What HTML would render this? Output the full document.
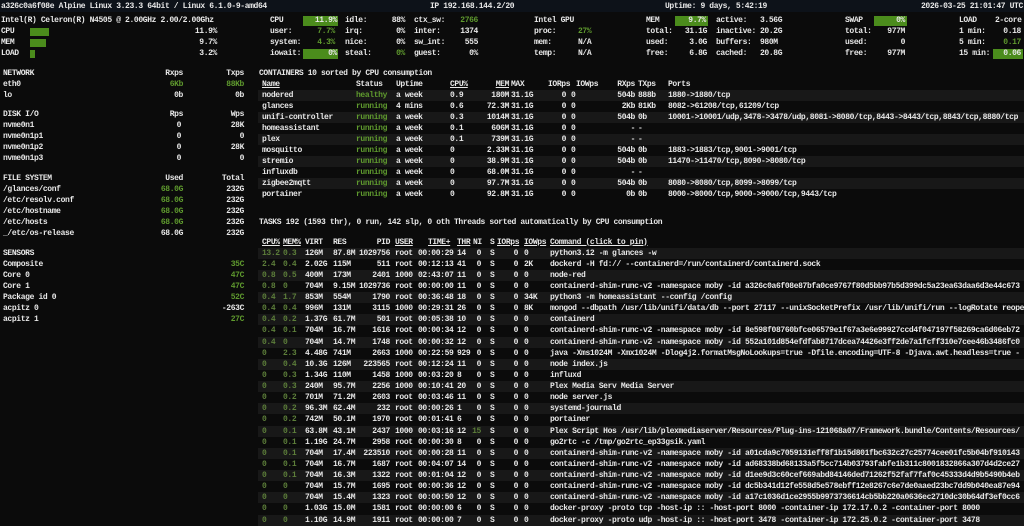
<!DOCTYPE html>
<html><head><meta charset="utf-8">
<style>
*{margin:0;padding:0;box-sizing:border-box}
body{width:1024px;height:526px;background:#0b0b0b;color:#e8e8e8;font-family:"Liberation Mono","DejaVu Sans Mono",monospace;font-size:8px;font-weight:bold;letter-spacing:-0.37px;position:relative;overflow:hidden}
.t{position:absolute;white-space:pre;line-height:11px;height:11px}
.r{text-align:right}
.g{color:#5f9a2e}
.d{color:#5d7f3a}
.box{position:absolute;background:#4b8c1c;height:10px}
.bar{position:absolute;background:#4b8c1c;height:8px}
.u{text-decoration:underline}
.row{position:absolute;left:258px;width:766px;height:11px;white-space:pre;line-height:11px}
.st{background:#181818}
.pr{display:grid;grid-template-columns:21px 22px 28px 25px 37px 23px 39px 15px 18px 7px 27px 26px auto;padding-left:4px}
.pr>span{overflow:visible;white-space:pre}
.pr>.pid{text-align:right;padding-right:5px}
.pr>.ni{text-align:right;padding-right:9px}
.pr>.io{text-align:right;padding-right:6px}
.cr{display:grid;grid-template-columns:94px 40px 54px 30px 31px 38px 22px 37px 30px 30px auto;padding-left:4px}
.cr>.rr{text-align:right;padding-right:2px}
.cr>.ri{text-align:right;padding-right:5px}
.cr>.rx{text-align:right;padding-right:3px}
</style></head><body>
<div style="position:absolute;left:0;top:0;width:1024px;height:12px;background:#0d1219"></div>
<div class="t" style="left:1px;top:1px">a326c0a6f08e Alpine Linux 3.23.3 64bit / Linux 6.1.0-9-amd64</div>
<div class="t" style="left:430px;top:1px">IP 192.168.144.2/20</div>
<div class="t" style="left:665px;top:1px">Uptime: 9 days, 5:42:19</div>
<div class="t" style="left:921px;top:1px">2026-03-25 21:01:47 UTC</div>

<div class="t" style="left:1px;top:15px">Intel(R) Celeron(R) N4505 @ 2.00GHz 2.00/2.00Ghz</div>
<div class="t" style="left:1px;top:26px">CPU</div><div class="bar" style="left:30px;top:28px;width:19px"></div><div class="t r" style="right:807px;top:26px">11.9%</div>
<div class="t" style="left:1px;top:37px">MEM</div><div class="bar" style="left:30px;top:39px;width:16px"></div><div class="t r" style="right:807px;top:37px">9.7%</div>
<div class="t" style="left:1px;top:48px">LOAD</div><div class="bar" style="left:30px;top:50px;width:5px"></div><div class="t r" style="right:807px;top:48px">3.2%</div>

<div class="t" style="left:270px;top:15px">CPU</div><div class="box" style="left:303px;top:16px;width:35px"></div><div class="t r" style="right:687px;top:15px">11.9%</div>
<div class="t" style="left:270px;top:26px">user:</div><div class="t r g" style="right:689px;top:26px">7.7%</div>
<div class="t" style="left:270px;top:37px">system:</div><div class="t r g" style="right:689px;top:37px">4.3%</div>
<div class="t" style="left:270px;top:48px">iowait:</div><div class="box" style="left:303px;top:49px;width:35px"></div><div class="t r" style="right:687px;top:48px">0%</div>
<div class="t" style="left:345px;top:15px">idle:</div><div class="t r" style="right:619px;top:15px">88%</div>
<div class="t" style="left:345px;top:26px">irq:</div><div class="t r" style="right:619px;top:26px">0%</div>
<div class="t" style="left:345px;top:37px">nice:</div><div class="t r" style="right:619px;top:37px">0%</div>
<div class="t" style="left:345px;top:48px">steal:</div><div class="t r g" style="right:619px;top:48px">0%</div>
<div class="t" style="left:414px;top:15px">ctx_sw:</div><div class="t r g" style="right:546px;top:15px">2766</div>
<div class="t" style="left:414px;top:26px">inter:</div><div class="t r" style="right:546px;top:26px">1374</div>
<div class="t" style="left:414px;top:37px">sw_int:</div><div class="t r" style="right:546px;top:37px">555</div>
<div class="t" style="left:414px;top:48px">guest:</div><div class="t r" style="right:546px;top:48px">0%</div>
<div class="t" style="left:534px;top:15px">Intel GPU</div>
<div class="t" style="left:534px;top:26px">proc:</div><div class="t g" style="left:578px;top:26px">27%</div>
<div class="t" style="left:534px;top:37px">mem:</div><div class="t" style="left:578px;top:37px">N/A</div>
<div class="t" style="left:534px;top:48px">temp:</div><div class="t" style="left:578px;top:48px">N/A</div>
<div class="t" style="left:646px;top:15px">MEM</div><div class="box" style="left:675px;top:16px;width:33px"></div><div class="t r" style="right:318px;top:15px">9.7%</div>
<div class="t" style="left:646px;top:26px">total:</div><div class="t r" style="right:317px;top:26px">31.1G</div>
<div class="t" style="left:646px;top:37px">used:</div><div class="t r" style="right:317px;top:37px">3.0G</div>
<div class="t" style="left:646px;top:48px">free:</div><div class="t r" style="right:317px;top:48px">6.8G</div>
<div class="t" style="left:716px;top:15px">active:</div><div class="t" style="left:760px;top:15px">3.56G</div>
<div class="t" style="left:716px;top:26px">inactive:</div><div class="t" style="left:760px;top:26px">20.2G</div>
<div class="t" style="left:716px;top:37px">buffers:</div><div class="t" style="left:760px;top:37px">980M</div>
<div class="t" style="left:716px;top:48px">cached:</div><div class="t" style="left:760px;top:48px">20.8G</div>
<div class="t" style="left:845px;top:15px">SWAP</div><div class="box" style="left:874px;top:16px;width:33px"></div><div class="t r" style="right:119px;top:15px">0%</div>
<div class="t" style="left:845px;top:26px">total:</div><div class="t r" style="right:119px;top:26px">977M</div>
<div class="t" style="left:845px;top:37px">used:</div><div class="t r" style="right:119px;top:37px">0</div>
<div class="t" style="left:845px;top:48px">free:</div><div class="t r" style="right:119px;top:48px">977M</div>
<div class="t" style="left:959px;top:15px">LOAD</div><div class="t" style="left:995px;top:15px">2-core</div>
<div class="t" style="left:959px;top:26px">1 min:</div><div class="t r" style="right:3px;top:26px">0.18</div>
<div class="t" style="left:959px;top:37px">5 min:</div><div class="t r g" style="right:3px;top:37px">0.17</div>
<div class="t" style="left:959px;top:48px">15 min:</div><div class="box" style="left:993px;top:49px;width:30px"></div><div class="t r" style="right:3px;top:48px">0.06</div>

<div class="t" style="left:3px;top:68px">NETWORK</div><div class="t r" style="right:841px;top:68px">Rxps</div><div class="t r" style="right:780px;top:68px">Txps</div>
<div class="t" style="left:3px;top:79px">eth0</div><div class="t r g" style="right:841px;top:79px">6Kb</div><div class="t r g" style="right:780px;top:79px">88Kb</div>
<div class="t" style="left:3px;top:90px">lo</div><div class="t r" style="right:841px;top:90px">0b</div><div class="t r" style="right:780px;top:90px">0b</div>

<div class="t" style="left:3px;top:109px">DISK I/O</div><div class="t r" style="right:841px;top:109px">Rps</div><div class="t r" style="right:780px;top:109px">Wps</div>
<div class="t" style="left:3px;top:120px">nvme0n1</div><div class="t r" style="right:843px;top:120px">0</div><div class="t r" style="right:780px;top:120px">28K</div>
<div class="t" style="left:3px;top:131px">nvme0n1p1</div><div class="t r" style="right:843px;top:131px">0</div><div class="t r" style="right:780px;top:131px">0</div>
<div class="t" style="left:3px;top:142px">nvme0n1p2</div><div class="t r" style="right:843px;top:142px">0</div><div class="t r" style="right:780px;top:142px">28K</div>
<div class="t" style="left:3px;top:153px">nvme0n1p3</div><div class="t r" style="right:843px;top:153px">0</div><div class="t r" style="right:780px;top:153px">0</div>

<div class="t" style="left:3px;top:173px">FILE SYSTEM</div><div class="t r" style="right:841px;top:173px">Used</div><div class="t r" style="right:780px;top:173px">Total</div>
<div class="t" style="left:3px;top:184px">/glances/conf</div><div class="t r g" style="right:841px;top:184px">68.0G</div><div class="t r" style="right:780px;top:184px">232G</div>
<div class="t" style="left:3px;top:195px">/etc/resolv.conf</div><div class="t r g" style="right:841px;top:195px">68.0G</div><div class="t r" style="right:780px;top:195px">232G</div>
<div class="t" style="left:3px;top:206px">/etc/hostname</div><div class="t r g" style="right:841px;top:206px">68.0G</div><div class="t r" style="right:780px;top:206px">232G</div>
<div class="t" style="left:3px;top:217px">/etc/hosts</div><div class="t r g" style="right:841px;top:217px">68.0G</div><div class="t r" style="right:780px;top:217px">232G</div>
<div class="t" style="left:3px;top:228px">_/etc/os-release</div><div class="t r" style="right:841px;top:228px">68.0G</div><div class="t r" style="right:780px;top:228px">232G</div>

<div class="t" style="left:3px;top:248px">SENSORS</div>
<div class="t" style="left:3px;top:259px">Composite</div><div class="t r g" style="right:780px;top:259px">35C</div>
<div class="t" style="left:3px;top:270px">Core 0</div><div class="t r g" style="right:780px;top:270px">47C</div>
<div class="t" style="left:3px;top:281px">Core 1</div><div class="t r g" style="right:780px;top:281px">47C</div>
<div class="t" style="left:3px;top:292px">Package id 0</div><div class="t r g" style="right:780px;top:292px">52C</div>
<div class="t" style="left:3px;top:303px">acpitz 0</div><div class="t r" style="right:780px;top:303px">-263C</div>
<div class="t" style="left:3px;top:314px">acpitz 1</div><div class="t r g" style="right:780px;top:314px">27C</div>

<div class="t" style="left:259px;top:68px">CONTAINERS 10 sorted by CPU consumption</div>
<div class="row cr" style="top:79px"><span class="u">Name</span><span>Status</span><span>Uptime</span><span class="u">CPU%</span><span class="rr u">MEM</span><span>MAX</span><span style="margin-left:-1px">IORps</span><span style="padding-left:5px">IOWps</span><span class="rx">RXps</span><span>TXps</span><span>Ports</span></div>
<div class="row cr st" style="top:90px"><span>nodered</span><span class="g">healthy</span><span>a week</span><span>0.9</span><span class="rr">180M</span><span>31.1G</span><span class="ri">0</span><span>0</span><span class="rx">504b</span><span>888b</span><span>1880-&gt;1880/tcp</span></div>
<div class="row cr" style="top:101px"><span>glances</span><span class="g">running</span><span>4 mins</span><span>0.6</span><span class="rr">72.3M</span><span>31.1G</span><span class="ri">0</span><span>0</span><span class="rx">2Kb</span><span>81Kb</span><span>8082-&gt;61208/tcp,61209/tcp</span></div>
<div class="row cr st" style="top:112px"><span>unifi-controller</span><span class="g">running</span><span>a week</span><span>0.3</span><span class="rr">1014M</span><span>31.1G</span><span class="ri">0</span><span>0</span><span class="rx">504b</span><span>0b</span><span>10001-&gt;10001/udp,3478-&gt;3478/udp,8081-&gt;8080/tcp,8443-&gt;8443/tcp,8843/tcp,8880/tcp</span></div>
<div class="row cr" style="top:123px"><span>homeassistant</span><span class="g">running</span><span>a week</span><span>0.1</span><span class="rr">606M</span><span>31.1G</span><span class="ri">0</span><span>0</span><span class="rx">-</span><span>-</span><span></span></div>
<div class="row cr st" style="top:134px"><span>plex</span><span class="g">running</span><span>a week</span><span>0.1</span><span class="rr">739M</span><span>31.1G</span><span class="ri">0</span><span>0</span><span class="rx">-</span><span>-</span><span></span></div>
<div class="row cr" style="top:145px"><span>mosquitto</span><span class="g">running</span><span>a week</span><span>0</span><span class="rr">2.33M</span><span>31.1G</span><span class="ri">0</span><span>0</span><span class="rx">504b</span><span>0b</span><span>1883-&gt;1883/tcp,9001-&gt;9001/tcp</span></div>
<div class="row cr st" style="top:156px"><span>stremio</span><span class="g">running</span><span>a week</span><span>0</span><span class="rr">38.9M</span><span>31.1G</span><span class="ri">0</span><span>0</span><span class="rx">504b</span><span>0b</span><span>11470-&gt;11470/tcp,8090-&gt;8080/tcp</span></div>
<div class="row cr" style="top:167px"><span>influxdb</span><span class="g">running</span><span>a week</span><span>0</span><span class="rr">68.0M</span><span>31.1G</span><span class="ri">0</span><span>0</span><span class="rx">-</span><span>-</span><span></span></div>
<div class="row cr st" style="top:178px"><span>zigbee2mqtt</span><span class="g">running</span><span>a week</span><span>0</span><span class="rr">97.7M</span><span>31.1G</span><span class="ri">0</span><span>0</span><span class="rx">504b</span><span>0b</span><span>8080-&gt;8080/tcp,8099-&gt;8099/tcp</span></div>
<div class="row cr" style="top:189px"><span>portainer</span><span class="g">running</span><span>a week</span><span>0</span><span class="rr">92.8M</span><span>31.1G</span><span class="ri">0</span><span>0</span><span class="rx">0b</span><span>0b</span><span>8000-&gt;8000/tcp,9000-&gt;9000/tcp,9443/tcp</span></div>

<div class="t" style="left:259px;top:217px">TASKS 192 (1593 thr), 0 run, 142 slp, 0 oth Threads sorted automatically by CPU consumption</div>

<div class="row pr" style="top:236.5px"><span class="u">CPU%</span><span class="u">MEM%</span><span>VIRT</span><span>RES</span><span class="pid">PID</span><span class="u">USER</span><span class="u" style="padding-left:10px">TIME+</span><span class="u">THR</span><span style="padding-left:1px">NI</span><span>S</span><span class="u">IORps</span><span class="u">IOWps</span><span class="u">Command (click to pin)</span></div>
<div class="row pr st" style="top:247.5px"><span class="d">13.2</span><span class="d">0.3</span><span>126M</span><span>87.8M</span><span class="pid">1029756</span><span>root</span><span>00:00:29</span><span>14</span><span class="ni">0</span><span>S</span><span class="io">0</span><span>0</span><span>python3.12 -m glances -w</span></div>
<div class="row pr" style="top:258.6px"><span class="d">2.4</span><span class="d">0.4</span><span>2.02G</span><span>115M</span><span class="pid">511</span><span>root</span><span>00:12:13</span><span>41</span><span class="ni">0</span><span>S</span><span class="io">0</span><span>2K</span><span>dockerd -H fd:// --containerd=/run/containerd/containerd.sock</span></div>
<div class="row pr st" style="top:269.8px"><span class="d">0.8</span><span class="d">0.5</span><span>400M</span><span>173M</span><span class="pid">2401</span><span>1000</span><span>02:43:07</span><span>11</span><span class="ni">0</span><span>S</span><span class="io">0</span><span>0</span><span>node-red</span></div>
<div class="row pr" style="top:280.9px"><span class="d">0.8</span><span class="d">0</span><span>704M</span><span>9.15M</span><span class="pid">1029736</span><span>root</span><span>00:00:00</span><span>11</span><span class="ni">0</span><span>S</span><span class="io">0</span><span>0</span><span>containerd-shim-runc-v2 -namespace moby -id a326c0a6f08e87bfa0ce9767f80d5bb97b5d399dc5a23ea63daa6d3e44c673</span></div>
<div class="row pr st" style="top:292px"><span class="d">0.4</span><span class="d">1.7</span><span>853M</span><span>554M</span><span class="pid">1790</span><span>root</span><span>00:36:48</span><span>18</span><span class="ni">0</span><span>S</span><span class="io">0</span><span>34K</span><span>python3 -m homeassistant --config /config</span></div>
<div class="row pr" style="top:303.1px"><span class="d">0.4</span><span class="d">0.4</span><span>996M</span><span>131M</span><span class="pid">3115</span><span>1000</span><span>00:29:31</span><span>26</span><span class="ni">0</span><span>S</span><span class="io">0</span><span>8K</span><span>mongod --dbpath /usr/lib/unifi/data/db --port 27117 --unixSocketPrefix /usr/lib/unifi/run --logRotate reopen</span></div>
<div class="row pr st" style="top:314.3px"><span class="d">0.4</span><span class="d">0.2</span><span>1.37G</span><span>61.7M</span><span class="pid">501</span><span>root</span><span>00:05:38</span><span>10</span><span class="ni">0</span><span>S</span><span class="io">0</span><span>0</span><span>containerd</span></div>
<div class="row pr" style="top:325.4px"><span class="d">0.4</span><span class="d">0.1</span><span>704M</span><span>16.7M</span><span class="pid">1616</span><span>root</span><span>00:00:34</span><span>12</span><span class="ni">0</span><span>S</span><span class="io">0</span><span>0</span><span>containerd-shim-runc-v2 -namespace moby -id 8e598f08760bfce06579e1f67a3e6e99927ccd4f047197f58269ca6d06eb72</span></div>
<div class="row pr st" style="top:336.5px"><span class="d">0.4</span><span class="d">0</span><span>704M</span><span>14.7M</span><span class="pid">1748</span><span>root</span><span>00:00:32</span><span>12</span><span class="ni">0</span><span>S</span><span class="io">0</span><span>0</span><span>containerd-shim-runc-v2 -namespace moby -id 552a101d854efdfab8717dcea74426e3ff2de7a1fcff310e7cee46b3486fc0</span></div>
<div class="row pr" style="top:347.6px"><span class="d">0</span><span class="d">2.3</span><span>4.48G</span><span>741M</span><span class="pid">2663</span><span>1000</span><span>00:22:59</span><span>929</span><span class="ni">0</span><span>S</span><span class="io">0</span><span>0</span><span>java -Xms1024M -Xmx1024M -Dlog4j2.formatMsgNoLookups=true -Dfile.encoding=UTF-8 -Djava.awt.headless=true -</span></div>
<div class="row pr st" style="top:358.8px"><span class="d">0</span><span class="d">0.4</span><span>10.3G</span><span>126M</span><span class="pid">223565</span><span>root</span><span>00:12:24</span><span>11</span><span class="ni">0</span><span>S</span><span class="io">0</span><span>0</span><span>node index.js</span></div>
<div class="row pr" style="top:369.9px"><span class="d">0</span><span class="d">0.3</span><span>1.34G</span><span>110M</span><span class="pid">1458</span><span>1000</span><span>00:03:20</span><span>8</span><span class="ni">0</span><span>S</span><span class="io">0</span><span>0</span><span>influxd</span></div>
<div class="row pr st" style="top:381px"><span class="d">0</span><span class="d">0.3</span><span>240M</span><span>95.7M</span><span class="pid">2256</span><span>1000</span><span>00:10:41</span><span>20</span><span class="ni">0</span><span>S</span><span class="io">0</span><span>0</span><span>Plex Media Serv Media Server</span></div>
<div class="row pr" style="top:392.1px"><span class="d">0</span><span class="d">0.2</span><span>701M</span><span>71.2M</span><span class="pid">2603</span><span>root</span><span>00:03:46</span><span>11</span><span class="ni">0</span><span>S</span><span class="io">0</span><span>0</span><span>node server.js</span></div>
<div class="row pr st" style="top:403.3px"><span class="d">0</span><span class="d">0.2</span><span>96.3M</span><span>62.4M</span><span class="pid">232</span><span>root</span><span>00:00:26</span><span>1</span><span class="ni">0</span><span>S</span><span class="io">0</span><span>0</span><span>systemd-journald</span></div>
<div class="row pr" style="top:414.4px"><span class="d">0</span><span class="d">0.2</span><span>742M</span><span>50.1M</span><span class="pid">1970</span><span>root</span><span>00:01:41</span><span>6</span><span class="ni">0</span><span>S</span><span class="io">0</span><span>0</span><span>portainer</span></div>
<div class="row pr st" style="top:425.5px"><span class="d">0</span><span class="d">0.1</span><span>63.8M</span><span>43.1M</span><span class="pid">2437</span><span>1000</span><span>00:03:16</span><span>12</span><span class="ni d">15</span><span>S</span><span class="io">0</span><span>0</span><span>Plex Script Hos /usr/lib/plexmediaserver/Resources/Plug-ins-121068a07/Framework.bundle/Contents/Resources/</span></div>
<div class="row pr" style="top:436.6px"><span class="d">0</span><span class="d">0.1</span><span>1.19G</span><span>24.7M</span><span class="pid">2958</span><span>root</span><span>00:00:30</span><span>8</span><span class="ni">0</span><span>S</span><span class="io">0</span><span>0</span><span>go2rtc -c /tmp/go2rtc_ep33gsik.yaml</span></div>
<div class="row pr st" style="top:447.8px"><span class="d">0</span><span class="d">0.1</span><span>704M</span><span>17.4M</span><span class="pid">223510</span><span>root</span><span>00:00:28</span><span>11</span><span class="ni">0</span><span>S</span><span class="io">0</span><span>0</span><span>containerd-shim-runc-v2 -namespace moby -id a01cda9c7059131eff8f1b15d801fbc632c27c25774cee01fc5b04bf910143</span></div>
<div class="row pr" style="top:458.9px"><span class="d">0</span><span class="d">0.1</span><span>704M</span><span>16.7M</span><span class="pid">1687</span><span>root</span><span>00:04:07</span><span>14</span><span class="ni">0</span><span>S</span><span class="io">0</span><span>0</span><span>containerd-shim-runc-v2 -namespace moby -id ad68338bd68133a5f5cc714b03793fabfe1b311c8001832866a307d4d2ce27</span></div>
<div class="row pr st" style="top:470px"><span class="d">0</span><span class="d">0.1</span><span>704M</span><span>16.3M</span><span class="pid">1322</span><span>root</span><span>00:01:04</span><span>12</span><span class="ni">0</span><span>S</span><span class="io">0</span><span>0</span><span>containerd-shim-runc-v2 -namespace moby -id d1ee9d3c60cef669abd84146ded71262f52faf7faf0c45333d4d9b5490b4eb</span></div>
<div class="row pr" style="top:481.1px"><span class="d">0</span><span class="d">0</span><span>704M</span><span>15.7M</span><span class="pid">1695</span><span>root</span><span>00:00:36</span><span>12</span><span class="ni">0</span><span>S</span><span class="io">0</span><span>0</span><span>containerd-shim-runc-v2 -namespace moby -id dc5b341d12fe558d5e578ebff12e8267c6e7de0aaed23bc7dd9b040ea87e94</span></div>
<div class="row pr st" style="top:492.3px"><span class="d">0</span><span class="d">0</span><span>704M</span><span>15.4M</span><span class="pid">1323</span><span>root</span><span>00:00:50</span><span>12</span><span class="ni">0</span><span>S</span><span class="io">0</span><span>0</span><span>containerd-shim-runc-v2 -namespace moby -id a17c1036d1ce2955b9973736614cb5bb220a0636ec2710dc30b64df3ef0cc6</span></div>
<div class="row pr" style="top:503.4px"><span class="d">0</span><span class="d">0</span><span>1.03G</span><span>15.0M</span><span class="pid">1581</span><span>root</span><span>00:00:00</span><span>6</span><span class="ni">0</span><span>S</span><span class="io">0</span><span>0</span><span>docker-proxy -proto tcp -host-ip :: -host-port 8000 -container-ip 172.17.0.2 -container-port 8000</span></div>
<div class="row pr st" style="top:514.5px"><span class="d">0</span><span class="d">0</span><span>1.10G</span><span>14.9M</span><span class="pid">1911</span><span>root</span><span>00:00:00</span><span>7</span><span class="ni">0</span><span>S</span><span class="io">0</span><span>0</span><span>docker-proxy -proto udp -host-ip :: -host-port 3478 -container-ip 172.25.0.2 -container-port 3478</span></div>
</body></html>
